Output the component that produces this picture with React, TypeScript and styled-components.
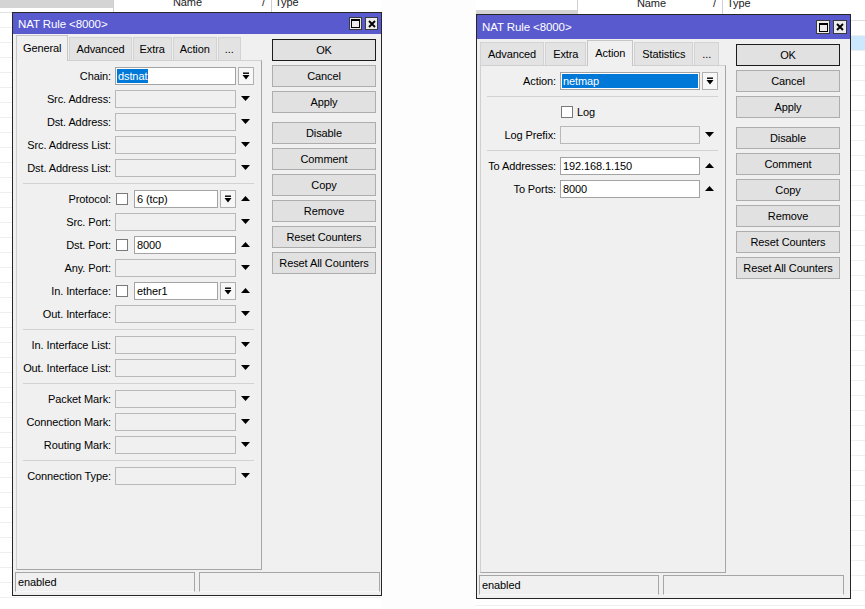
import React from "react";
import styled, { createGlobalStyle } from "styled-components";

const GlobalStyle = createGlobalStyle`
  * { box-sizing: border-box; }
  html, body { margin: 0; padding: 0; background: #ffffff; }
  body {
    font-family: "Liberation Sans", Arial, sans-serif;
    font-size: 11px;
    letter-spacing: -0.1px;
    color: #000;
  }
`;

type FieldRow = {
  label: string;
  value?: string;
  white?: boolean;
  check?: boolean;
  innerCombo?: boolean;
  select?: "inline" | "full";
  trail: "combo" | "down" | "up";
};
type CheckRow = { checkText: string };
type Row = FieldRow | CheckRow | "sep";

const leftRows: Row[] = [
  { label: "Chain:", value: "dstnat", white: true, select: "inline", trail: "combo" },
  { label: "Src. Address:", trail: "down" },
  { label: "Dst. Address:", trail: "down" },
  { label: "Src. Address List:", trail: "down" },
  { label: "Dst. Address List:", trail: "down" },
  "sep",
  { label: "Protocol:", check: true, value: "6 (tcp)", white: true, innerCombo: true, trail: "up" },
  { label: "Src. Port:", trail: "down" },
  { label: "Dst. Port:", check: true, value: "8000", white: true, trail: "up" },
  { label: "Any. Port:", trail: "down" },
  { label: "In. Interface:", check: true, value: "ether1", white: true, innerCombo: true, trail: "up" },
  { label: "Out. Interface:", trail: "down" },
  "sep",
  { label: "In. Interface List:", trail: "down" },
  { label: "Out. Interface List:", trail: "down" },
  "sep",
  { label: "Packet Mark:", trail: "down" },
  { label: "Connection Mark:", trail: "down" },
  { label: "Routing Mark:", trail: "down" },
  "sep",
  { label: "Connection Type:", trail: "down" },
];

const rightRows: Row[] = [
  { label: "Action:", value: "netmap", white: true, select: "full", trail: "combo" },
  "sep",
  { checkText: "Log" },
  { label: "Log Prefix:", trail: "down" },
  "sep",
  { label: "To Addresses:", value: "192.168.1.150", white: true, trail: "up" },
  { label: "To Ports:", value: "8000", white: true, trail: "up" },
];

const buttons = [
  "OK",
  "Cancel",
  "Apply",
  "Disable",
  "Comment",
  "Copy",
  "Remove",
  "Reset Counters",
  "Reset All Counters",
];

/* ---------- icons ---------- */

const DownArrow = () => (
  <svg width="9" height="5" viewBox="0 0 9 5">
    <polygon points="0,0 9,0 4.5,5" fill="#000" />
  </svg>
);

const UpArrow = () => (
  <svg width="9" height="5" viewBox="0 0 9 5">
    <polygon points="0,5 9,5 4.5,0" fill="#000" />
  </svg>
);

const ComboGlyph = () => (
  <svg width="8" height="8" viewBox="0 0 8 8">
    <rect x="1" y="0.5" width="6" height="1.4" fill="#000" />
    <polygon points="0.5,3 7.5,3 4,7.5" fill="#000" />
  </svg>
);

const MaxGlyph = () => (
  <svg width="9" height="9" viewBox="0 0 9 9">
    <rect x="0.5" y="0.5" width="8" height="8" fill="none" stroke="#000" />
    <rect x="0" y="0" width="9" height="2" fill="#000" />
  </svg>
);

const CloseGlyph = () => (
  <svg width="8" height="8" viewBox="0 0 8 8">
    <path d="M1 1 L7 7 M7 1 L1 7" stroke="#000" strokeWidth="1.9" />
  </svg>
);

/* ---------- desktop & background lists ---------- */

const Desktop = styled.div`
  position: relative;
  width: 865px;
  height: 609px;
  overflow: hidden;
  background: #fdfdfd;
`;

const BackList = styled.div<{ $left: number; $top: number; $width: number }>`
  position: absolute;
  left: ${(p) => p.$left}px;
  top: ${(p) => p.$top}px;
  width: ${(p) => p.$width}px;
  height: 640px;
  background: #ffffff;
`;

const BackHeader = styled.div`
  display: flex;
  align-items: flex-start;
  height: 25px;
  border-bottom: 1px solid #e2e2e2;
`;

const GreyCell = styled.div<{ $width: number; $top: number; $height: number }>`
  flex-shrink: 0;
  width: ${(p) => p.$width}px;
  height: ${(p) => p.$height}px;
  margin-top: ${(p) => p.$top}px;
  background: #d4d4d4;
`;

const HeadCell = styled.div<{ $width?: number; $pad: number; $textTop: number }>`
  display: flex;
  justify-content: space-between;
  ${(p) => (p.$width ? `width: ${p.$width}px;` : "flex: 1;")}
  height: 100%;
  padding: ${(p) => p.$textTop}px 6px 0 ${(p) => p.$pad}px;
  line-height: 14px;
  border-left: 1px solid #cfcfcf;
  color: #222;
`;

const ListRow = styled.div<{ $selected?: boolean }>`
  height: 15px;
  border-bottom: 1px solid #efefef;
  background: ${(p) => (p.$selected ? "#cce8ff" : "transparent")};
`;

/* ---------- window chrome ---------- */

const Window = styled.div<{ $left: number; $top: number; $width: number }>`
  position: absolute;
  left: ${(p) => p.$left}px;
  top: ${(p) => p.$top}px;
  width: ${(p) => p.$width}px;
  display: flex;
  flex-direction: column;
  background: #f0f0f0;
  border: 1px solid #262626;
`;

const TitleBar = styled.div<{ $height: number }>`
  display: flex;
  align-items: center;
  height: ${(p) => p.$height}px;
  padding: 0 3px 0 5px;
  background: #5a5acf;
  color: #ffffff;
  font-size: 11.5px;
`;

const TitleText = styled.span`
  flex: 1;
`;

const TitleButton = styled.div<{ $size: number }>`
  display: flex;
  align-items: center;
  justify-content: center;
  width: ${(p) => p.$size}px;
  height: ${(p) => p.$size}px;
  margin-left: 3px;
  background: #ececec;
  border: 1px solid #3a3a3a;
`;

const Body = styled.div`
  display: flex;
  padding: 1px 0 0 3px;
`;

const TabArea = styled.div`
  display: flex;
  flex-direction: column;
  width: 246px;
`;

const TabStrip = styled.div`
  display: flex;
  align-items: flex-end;
  gap: 1px;
  height: 25px;
`;

const Tab = styled.div<{ $active?: boolean; $pad: number }>`
  position: relative;
  z-index: ${(p) => (p.$active ? 1 : 0)};
  display: flex;
  align-items: center;
  height: ${(p) => (p.$active ? 26 : 23)}px;
  margin-bottom: ${(p) => (p.$active ? -1 : 0)}px;
  padding: 0 ${(p) => p.$pad}px ${(p) => (p.$active ? 2 : 0)}px;
  background: ${(p) => (p.$active ? "#f0f0f0" : "#e3e3e3")};
  border: 1px solid ${(p) => (p.$active ? "#c6c6c6" : "#d3d3d3")};
  border-bottom: none;
  white-space: nowrap;
`;

const Panel = styled.div<{ $height: number }>`
  height: ${(p) => p.$height}px;
  padding-top: 3px;
  background: #f0f0f0;
  border: 1px solid #d0d0d0;
  border-right-color: #a6a6a6;
  border-bottom-color: #a6a6a6;
`;

/* ---------- form ---------- */

const RowLine = styled.div`
  display: flex;
  align-items: center;
  height: 23px;
  padding-right: 7px;
`;

const Label = styled.div<{ $width: number }>`
  width: ${(p) => p.$width}px;
  flex-shrink: 0;
  padding-right: 4px;
  text-align: right;
  white-space: nowrap;
`;

const FieldArea = styled.div`
  display: flex;
  align-items: center;
  flex: 1;
  min-width: 0;
`;

const Input = styled.div<{ $white?: boolean }>`
  flex: 1;
  min-width: 0;
  height: 18px;
  padding: 0 2px;
  line-height: 16px;
  white-space: nowrap;
  overflow: hidden;
  background: ${(p) => (p.$white ? "#ffffff" : "#f0f0f0")};
  border: 1px solid ${(p) => (p.$white ? "#a3a3a3" : "#b9b9b9")};
`;

const Selection = styled.span<{ $full?: boolean }>`
  display: ${(p) => (p.$full ? "block" : "inline-block")};
  margin-left: -1px;
  margin-right: ${(p) => (p.$full ? "-1px" : "0")};
  margin-top: 1px;
  padding: 0 1px;
  height: 14px;
  line-height: 14px;
  background: #0078d7;
  color: #ffffff;
`;

const Check = styled.div`
  flex-shrink: 0;
  width: 12px;
  height: 12px;
  margin: 0 6px 0 1px;
  background: #ffffff;
  border: 1px solid #7a7a7a;
`;

const CheckText = styled.span`
  margin-left: -2px;
`;

const ComboButton = styled.div<{ $inner?: boolean }>`
  display: flex;
  align-items: center;
  justify-content: center;
  flex-shrink: 0;
  width: 16px;
  height: 18px;
  margin-left: ${(p) => (p.$inner ? 2 : 0)}px;
  background: #f7f7f7;
  border: 1px solid #b0b0b0;
`;

const ArrowCell = styled.div`
  display: flex;
  align-items: center;
  justify-content: center;
  flex-shrink: 0;
  width: 17px;
  margin-left: 1px;
`;

const Separator = styled.div`
  height: 1px;
  margin: 4px 7px 3px 6px;
  background: #d2d2d2;
`;

/* ---------- buttons & status ---------- */

const ButtonColumn = styled.div`
  display: flex;
  flex-direction: column;
  gap: 4px;
  width: 104px;
  margin: 4px 0 0 10px;
`;

const Button = styled.div<{ $default?: boolean; $groupStart?: boolean }>`
  display: flex;
  align-items: center;
  justify-content: center;
  height: 22px;
  margin-top: ${(p) => (p.$groupStart ? 5 : 0)}px;
  background: #e1e1e1;
  border: 1px solid ${(p) => (p.$default ? "#1c1c1c" : "#adadad")};
  white-space: nowrap;
`;

const StatusBar = styled.div<{ $right: number }>`
  display: flex;
  gap: 4px;
  padding: 2px ${(p) => p.$right}px 3px 2px;
`;

const StatusField = styled.div<{ $width?: number }>`
  ${(p) => (p.$width ? `width: ${p.$width}px;` : "flex: 1;")}
  height: 20px;
  padding-left: 2px;
  line-height: 18px;
  border: 1px solid #a6a6a6;
  border-bottom-color: #f8f8f8;
`;

/* ---------- components ---------- */

function FormRow({ row, labelWidth }: { row: Row; labelWidth: number }) {
  if (row === "sep") return <Separator />;

  if ("checkText" in row) {
    return (
      <RowLine>
        <Label $width={labelWidth} />
        <FieldArea>
          <Check />
          <CheckText>{row.checkText}</CheckText>
        </FieldArea>
        <ArrowCell />
      </RowLine>
    );
  }

  return (
    <RowLine>
      <Label $width={labelWidth}>{row.label}</Label>
      <FieldArea>
        {row.check && <Check />}
        <Input $white={row.white}>
          {row.select ? (
            <Selection $full={row.select === "full"}>{row.value}</Selection>
          ) : (
            row.value
          )}
        </Input>
        {row.innerCombo && (
          <ComboButton $inner>
            <ComboGlyph />
          </ComboButton>
        )}
      </FieldArea>
      <ArrowCell>
        {row.trail === "combo" && (
          <ComboButton>
            <ComboGlyph />
          </ComboButton>
        )}
        {row.trail === "down" && <DownArrow />}
        {row.trail === "up" && <UpArrow />}
      </ArrowCell>
    </RowLine>
  );
}

type NatWindowProps = {
  left: number;
  top: number;
  width: number;
  titleHeight: number;
  titleButton: number;
  panelHeight: number;
  tabs: string[];
  tabPad: number;
  active: string;
  labelWidth: number;
  statusRight: number;
  rows: Row[];
};

function NatWindow(props: NatWindowProps) {
  return (
    <Window $left={props.left} $top={props.top} $width={props.width}>
      <TitleBar $height={props.titleHeight}>
        <TitleText>NAT Rule &lt;8000&gt;</TitleText>
        <TitleButton $size={props.titleButton}>
          <MaxGlyph />
        </TitleButton>
        <TitleButton $size={props.titleButton}>
          <CloseGlyph />
        </TitleButton>
      </TitleBar>
      <Body>
        <TabArea>
          <TabStrip>
            {props.tabs.map((t) => (
              <Tab key={t} $active={t === props.active} $pad={props.tabPad}>
                {t}
              </Tab>
            ))}
          </TabStrip>
          <Panel $height={props.panelHeight}>
            {props.rows.map((r, i) => (
              <FormRow key={i} row={r} labelWidth={props.labelWidth} />
            ))}
          </Panel>
        </TabArea>
        <ButtonColumn>
          {buttons.map((b) => (
            <Button key={b} $default={b === "OK"} $groupStart={b === "Disable"}>
              {b}
            </Button>
          ))}
        </ButtonColumn>
      </Body>
      <StatusBar $right={props.statusRight}>
        <StatusField $width={180}>enabled</StatusField>
        <StatusField />
      </StatusBar>
    </Window>
  );
}

function App() {
  const listRows = Array.from({ length: 40 });
  return (
    <>
      <GlobalStyle />
      <Desktop>
        <BackList $left={0} $top={-12} $width={381}>
          <BackHeader>
            <GreyCell $width={113} $top={0} $height={20} />
            <HeadCell $width={158} $pad={59} $textTop={7}>
              <span>Name</span>
              <span>/</span>
            </HeadCell>
            <HeadCell $pad={3} $textTop={7}>
              Type
            </HeadCell>
          </BackHeader>
          {listRows.map((_, i) => (
            <ListRow key={i} />
          ))}
        </BackList>

        <BackList $left={476} $top={-4} $width={389}>
          <BackHeader>
            <GreyCell $width={101} $top={14} $height={11} />
            <HeadCell $width={145} $pad={59} $textTop={0}>
              <span>Name</span>
              <span>/</span>
            </HeadCell>
            <HeadCell $pad={4} $textTop={0}>
              Type
            </HeadCell>
          </BackHeader>
          {listRows.map((_, i) => (
            <ListRow key={i} $selected={i === 1} />
          ))}
        </BackList>

        <NatWindow
          left={12}
          top={12}
          width={370}
          titleHeight={21}
          titleButton={13}
          panelHeight={510}
          tabs={["General", "Advanced", "Extra", "Action", "..."]}
          tabPad={6}
          active="General"
          labelWidth={98}
          statusRight={1}
          rows={leftRows}
        />
        <NatWindow
          left={476}
          top={14}
          width={375}
          titleHeight={24}
          titleButton={14}
          panelHeight={508}
          tabs={["Advanced", "Extra", "Action", "Statistics", "..."]}
          tabPad={7}
          active="Action"
          labelWidth={79}
          statusRight={6}
          rows={rightRows}
        />
      </Desktop>
    </>
  );
}

export default App;
